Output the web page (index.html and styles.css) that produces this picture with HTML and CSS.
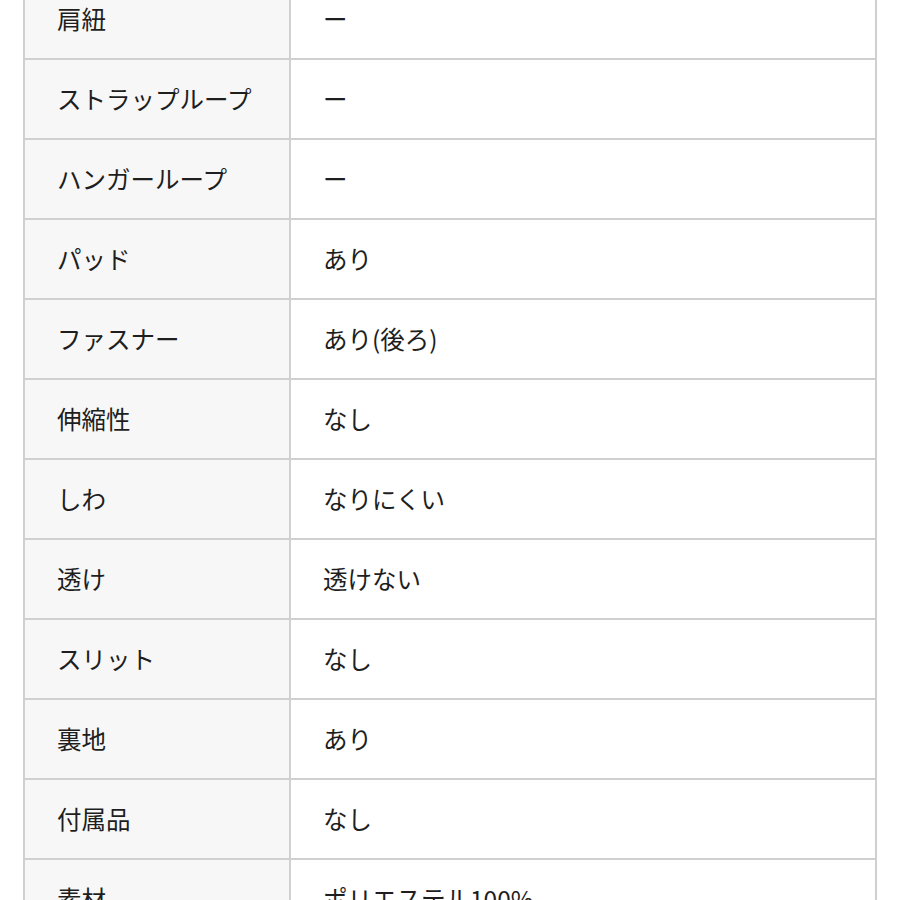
FILE: index.html
```html
<!DOCTYPE html>
<html lang="ja">
<head>
<meta charset="utf-8">
<link rel="stylesheet" href="styles.css">
</head>
<body>
<div class="wrap">
<table class="spec">
<tbody>
<tr><th>肩紐</th><td>ー</td></tr>
<tr><th>ストラップループ</th><td>ー</td></tr>
<tr><th>ハンガーループ</th><td>ー</td></tr>
<tr><th>パッド</th><td>あり</td></tr>
<tr><th>ファスナー</th><td>あり(後ろ)</td></tr>
<tr><th>伸縮性</th><td>なし</td></tr>
<tr><th>しわ</th><td>なりにくい</td></tr>
<tr><th>透け</th><td>透けない</td></tr>
<tr><th>スリット</th><td>なし</td></tr>
<tr><th>裏地</th><td>あり</td></tr>
<tr><th>付属品</th><td>なし</td></tr>
<tr><th>素材</th><td>ポリエステル100%</td></tr>
</tbody>
</table>
</div>
</body>
</html>
```
FILE: styles.css
```css
html, body {
  margin: 0;
  padding: 0;
  background: #ffffff;
  overflow: hidden;
}
.wrap {
  padding-left: 23px;
  margin-top: -22px;
}
.spec {
  border-collapse: collapse;
  width: 854px;
  table-layout: fixed;
  font-family: "Noto Sans CJK JP", "Noto Sans", sans-serif;
  font-size: 24.5px;
  color: #1e1e1e;
}
.spec th, .spec td {
  border: 2px solid #d0d0d0;
  height: 80px;
  padding: 0 0 0 32px;
  text-align: left;
  font-weight: 400;
  vertical-align: middle;
  line-height: 1;
  box-sizing: border-box;
}
.spec th {
  width: 266px;
  background: #f7f7f7;
}
.spec td {
  background: #ffffff;
}
```
